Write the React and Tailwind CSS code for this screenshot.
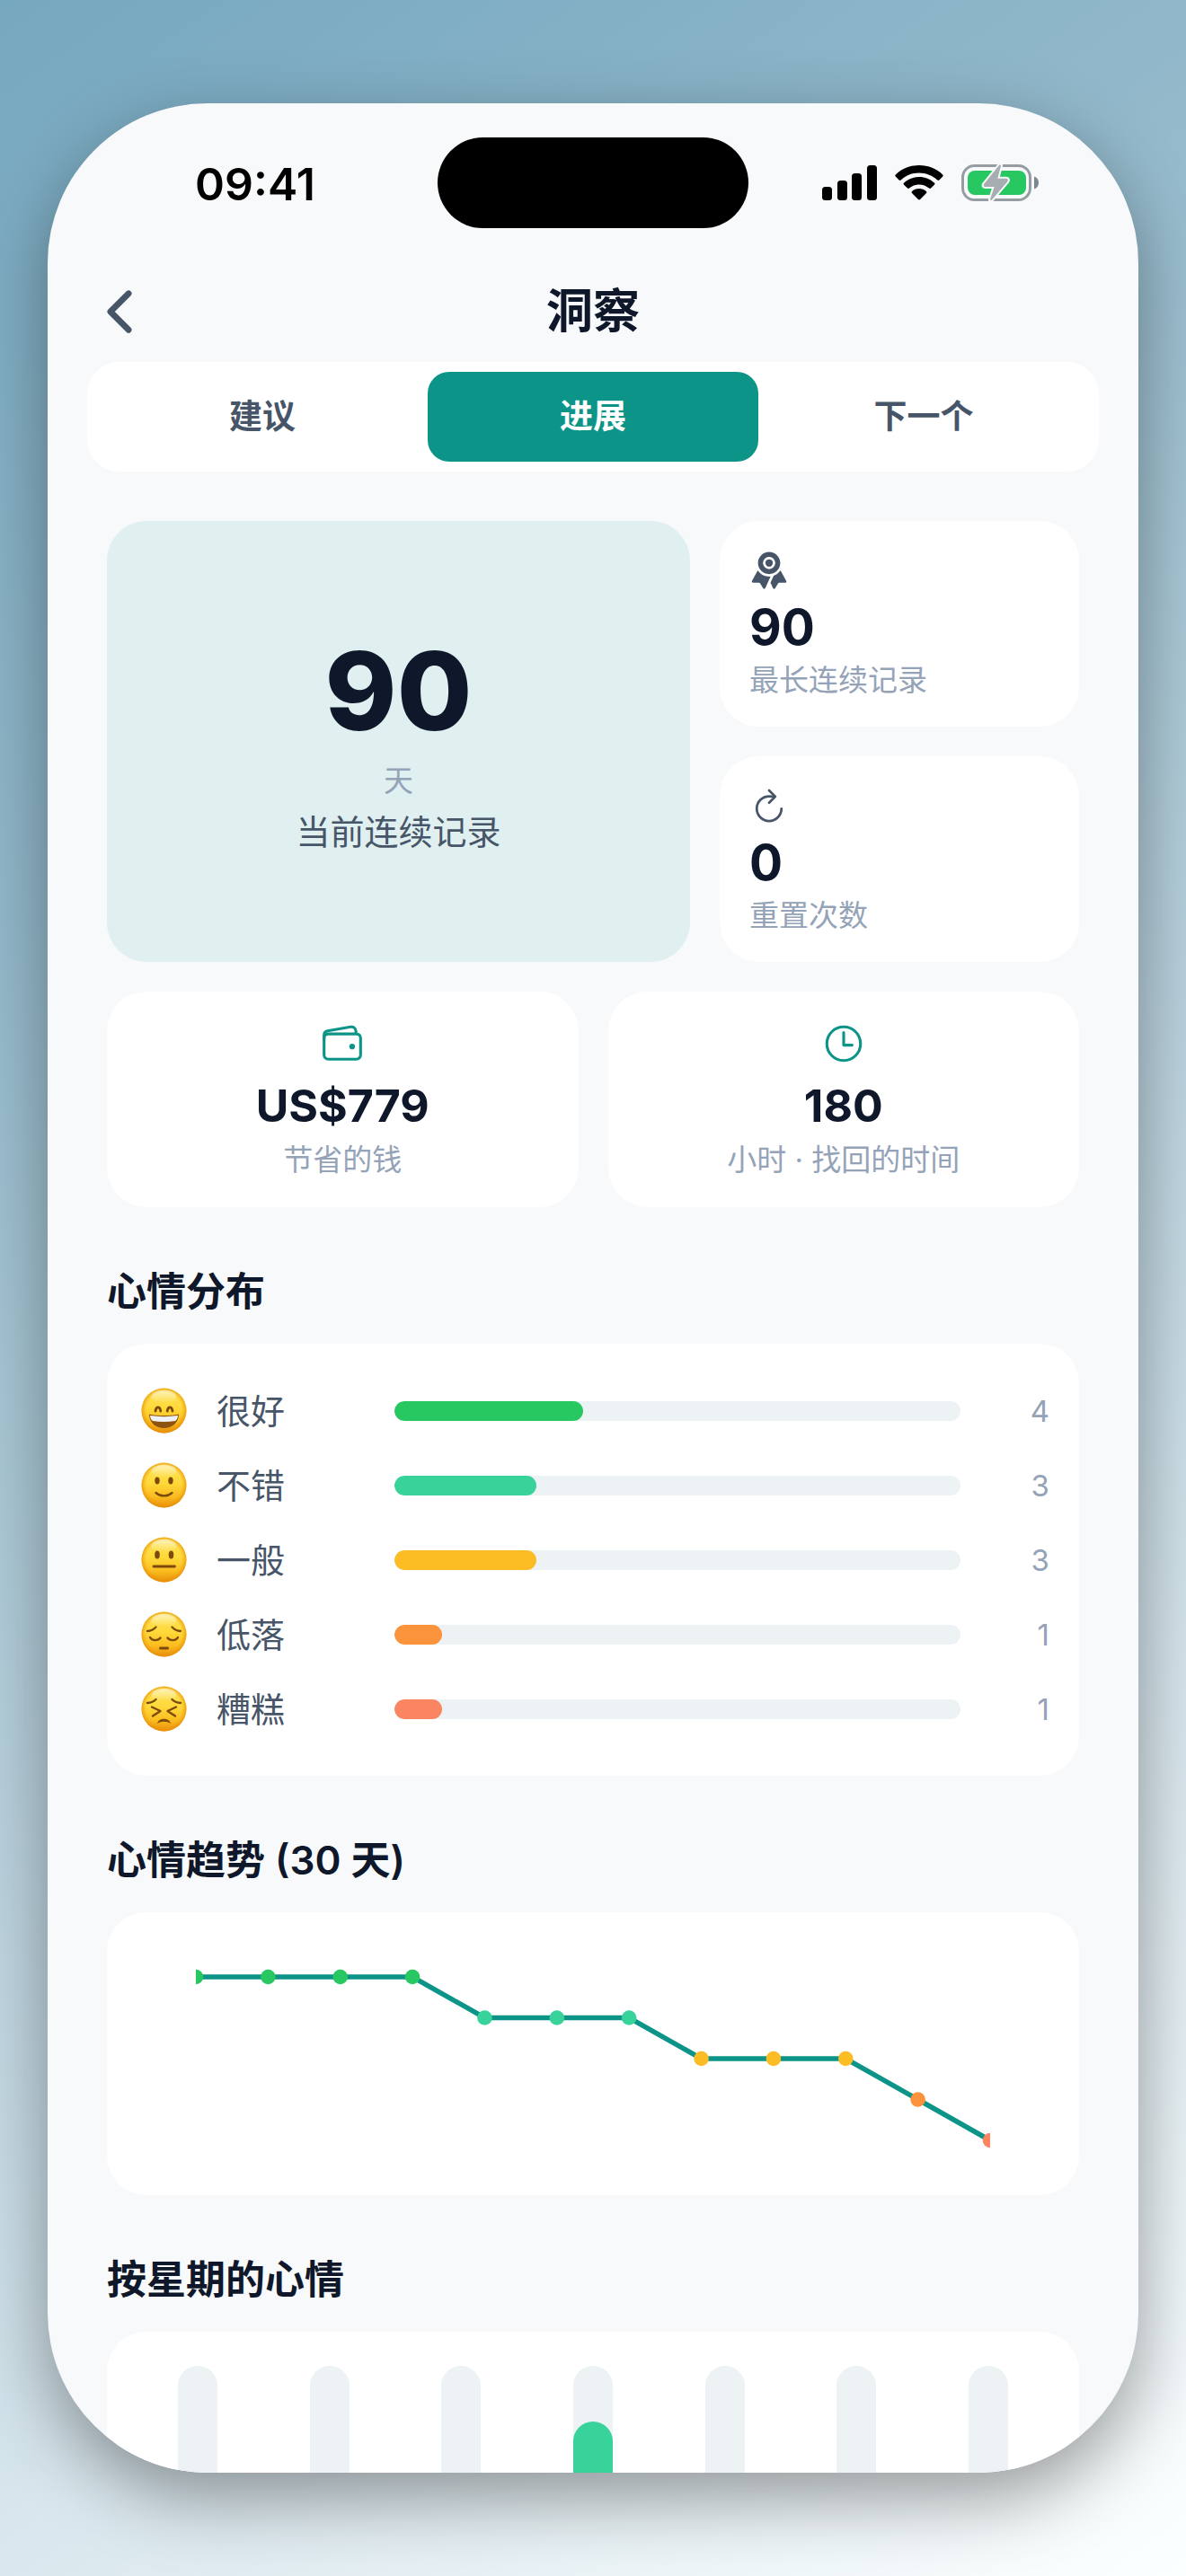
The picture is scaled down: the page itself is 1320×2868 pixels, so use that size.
import React, { useState } from "react";
import {
  IoChevronBack,
  IoRefreshOutline,
  IoRibbon,
  IoTimeOutline,
  IoWalletOutline,
} from "react-icons/io5";

const tabs = ["建议", "进展", "下一个"];

const moods = [
  { face: "great", label: "很好", count: 4, bar: "bg-[#27c861]" },
  { face: "good", label: "不错", count: 3, bar: "bg-[#38d39b]" },
  { face: "okay", label: "一般", count: 3, bar: "bg-[#fbbc24]" },
  { face: "low", label: "低落", count: 1, bar: "bg-[#fb923c]" },
  { face: "awful", label: "糟糕", count: 1, bar: "bg-[#fb8560]" },
];

const levelColors = {
  5: "#27c861",
  4: "#38d39b",
  3: "#fbbc24",
  2: "#fb923c",
  1: "#fb8560",
};

const trend = [5, 5, 5, 5, 4, 4, 4, 3, 3, 3, 2, 1];

const weekdays = [0, 0, 0, 72, 0, 0, 0];

function SignalIcon() {
  return (
    <svg width="61" height="39" viewBox="0 0 61 39" aria-hidden="true">
      <rect x="0" y="24" width="11" height="15" rx="3.5" />
      <rect x="17" y="17" width="11" height="22" rx="3.5" />
      <rect x="33" y="9" width="11" height="30" rx="3.5" />
      <rect x="50" y="0" width="11" height="39" rx="3.5" />
    </svg>
  );
}

function WifiIcon() {
  return (
    <svg width="54" height="39" viewBox="0 0 54 39" aria-hidden="true">
      <path d="M27 0c10.300 0 19.600 4 26.200 10.400.7.700.7 1.500 0 2.200l-3.800 3.800c-.6.600-1.400.600-2 0C42 11.500 35 8.400 27 8.400S12 11.500 6.600 16.400c-.6.600-1.400.600-2 0L.8 12.600c-.7-.7-.7-1.500 0-2.200C7.400 4 16.700 0 27 0z" />
      <path d="M27 13c6.600 0 12.500 2.500 16.900 6.600.7.600.7 1.500 0 2.100l-3.900 3.900c-.6.600-1.400.600-2 0-3-2.700-6.800-4.200-11-4.200s-8 1.500-11 4.200c-.6.600-1.400.600-2 0l-3.900-3.900c-.7-.6-.7-1.500 0-2.100C14.500 15.500 20.400 13 27 13z" />
      <path d="M27 26c3.100 0 5.800 1.100 7.900 2.900.7.600.7 1.400.1 2l-6.900 7.200c-.6.600-1.600.600-2.200 0L19 30.900c-.6-.6-.6-1.400.1-2C21.200 27.100 23.900 26 27 26z" />
    </svg>
  );
}

function BatteryIcon() {
  const bolt = "M43 1.500 26 22.500c-.7.900-.3 1.500.6 1.500H38l-5 15 17.500-20.500c.8-1 .4-1.700-.6-1.700H39z";
  return (
    <svg width="87" height="41" viewBox="0 0 87 41" aria-hidden="true">
      <rect x="1.500" y="1.500" width="75" height="38" rx="13" fill="none" stroke="#959da3" strokeWidth="3" />
      <rect x="7" y="7" width="65" height="27" rx="8" fill="#27c861" />
      <path d="M81 13.500c3 .8 5 3.500 5 7s-2 6.200-5 7z" fill="#7c8790" />
      <path d={bolt} fill="#f7f9fb" stroke="#f7f9fb" strokeWidth="6" strokeLinejoin="round" />
      <path d={bolt} fill="#a8adb1" stroke="#a8adb1" strokeWidth="2" strokeLinejoin="round" />
    </svg>
  );
}

function FaceFeatures({ face }) {
  const ink = "#7c4a0c";
  if (face === "great") {
    return (
      <>
        <path d="M15.500 26c.8-5.500 5-5.500 5.800 0M28.700 26c.8-5.500 5-5.500 5.800 0" fill="none" stroke={ink} strokeWidth="2.800" strokeLinecap="round" />
        <path d="M8.500 29.500c10 2 23 2 33 0 0 9-7 15.500-16.500 15.500S8.500 38.500 8.500 29.500z" fill="#8d5410" />
        <path d="M9.500 31c10 1.500 21 1.500 31 0-.2 3-1.200 5-3 6-8 1.200-17 1.200-25 0-1.800-1-2.800-3-3-6z" fill="#eef1f5" />
      </>
    );
  }
  if (face === "good") {
    return (
      <>
        <ellipse cx="17.500" cy="20.500" rx="2.700" ry="4" fill={ink} />
        <ellipse cx="32.500" cy="20.500" rx="2.700" ry="4" fill={ink} />
        <path d="M16 34c5 4.500 13 4.500 18 0" fill="none" stroke={ink} strokeWidth="2.400" strokeLinecap="round" />
      </>
    );
  }
  if (face === "okay") {
    return (
      <>
        <ellipse cx="17.500" cy="20" rx="2.800" ry="4.500" fill={ink} />
        <ellipse cx="33" cy="20" rx="2.800" ry="4.500" fill={ink} />
        <path d="M13.500 33h23.500" stroke={ink} strokeWidth="2.800" strokeLinecap="round" />
      </>
    );
  }
  if (face === "low") {
    return (
      <>
        <path d="M6.500 22c4-.3 7-1.800 9.500-4.500M43.500 22c-4-.3-7-1.800-9.500-4.500M9.500 29c2 4 9 4 11.500.5M40.500 29c-2 4-9 4-11.500.5" fill="none" stroke={ink} strokeWidth="2.300" strokeLinecap="round" />
        <path d="M21 41h8" stroke={ink} strokeWidth="3" strokeLinecap="round" />
      </>
    );
  }
  return (
    <>
      <path d="M6.500 19c4-.3 7-1.300 9.500-4M43.500 19c-4-.3-7-1.300-9.500-4M11.500 23.500l9.500 4.500-8.500 5.500M38.500 23.500l-9.500 4.500 8.500 5.500" fill="none" stroke={ink} strokeWidth="2.400" strokeLinecap="round" strokeLinejoin="round" />
      <path d="M17.500 42c1.500-7 13.500-7 15 0-4-3-11-3-15 0z" fill={ink} />
    </>
  );
}

function MoodFace({ face }) {
  return (
    <svg className="h-[51px] w-[61px] shrink-0" viewBox="0 0 50 51" aria-hidden="true">
      <defs>
        <linearGradient id={`skin-${face}`} x1="0" y1="0" x2="0" y2="1">
          <stop offset="0" stopColor="#fde458" />
          <stop offset="0.45" stopColor="#ffd93a" />
          <stop offset="0.75" stopColor="#fbbd1f" />
          <stop offset="1" stopColor="#e88f0c" />
        </linearGradient>
        <radialGradient id={`edge-${face}`} cx="0.5" cy="0.49" r="0.52">
          <stop offset="0.75" stopColor="#f0a010" stopOpacity="0" />
          <stop offset="1" stopColor="#e58e0a" stopOpacity="0.9" />
        </radialGradient>
        <linearGradient id={`shine-${face}`} x1="0" y1="0" x2="0" y2="1">
          <stop offset="0" stopColor="#fff" stopOpacity="0.6" />
          <stop offset="1" stopColor="#fff" stopOpacity="0" />
        </linearGradient>
      </defs>
      <circle cx="25" cy="25.500" r="25" fill={`url(#skin-${face})`} />
      <circle cx="25" cy="25.500" r="25" fill={`url(#edge-${face})`} />
      <ellipse cx="25" cy="10" rx="14" ry="7" fill={`url(#shine-${face})`} />
      <FaceFeatures face={face} />
    </svg>
  );
}

function StatusBar() {
  return (
    <div className="grid h-[176px] shrink-0 grid-cols-[1fr_346px_1fr] items-center">
      <span className="pt-1 pl-7 text-center text-[50px] leading-[60px] font-semibold text-black">09:41</span>
      <div className="h-[101px] rounded-full bg-black" />
      <div className="flex items-center justify-center gap-5 pr-7">
        <SignalIcon />
        <WifiIcon />
        <BatteryIcon />
      </div>
    </div>
  );
}

function SmallStat({ icon, value, label }) {
  return (
    <div className="flex flex-1 flex-col items-start gap-[6px] rounded-[44px] bg-white p-[33px]">
      {icon}
      <p className="text-[55px] leading-[70px] font-bold">{value}</p>
      <p className="text-[33px] leading-[37px] text-[#94a3b8]">{label}</p>
    </div>
  );
}

function WideStat({ icon, value, label }) {
  return (
    <div className="flex flex-1 flex-col items-center rounded-[44px] bg-white p-[33px]">
      {icon}
      <p className="mt-3 text-[50px] leading-[64px] font-bold">{value}</p>
      <p className="mt-2 text-[33px] leading-[40px] text-[#94a3b8]">{label}</p>
    </div>
  );
}

function Section({ title, children }) {
  return (
    <section className="pt-[68px]">
      <h2 className="mb-[31px] text-[44px] leading-[53px] font-semibold">{title}</h2>
      {children}
    </section>
  );
}

function TrendChart() {
  const points = trend.map((level, i) => ({
    x: (i * 884) / (trend.length - 1),
    y: 39 + (5 - level) * 45.5,
    level,
  }));

  return (
    <svg className="h-auto w-full" viewBox="0 0 884 249" role="img" aria-label="心情趋势">
      <polyline
        points={points.map((p) => `${p.x},${p.y}`).join(" ")}
        fill="none"
        stroke="#0d9488"
        strokeWidth="5.5"
      />
      {points.map((p) => (
        <circle key={p.x} cx={p.x} cy={p.y} r="8.3" fill={levelColors[p.level]} />
      ))}
    </svg>
  );
}

function App() {
  const [active, setActive] = useState("进展");
  const total = moods.reduce((sum, mood) => sum + mood.count, 0);

  return (
    <div className="flex h-screen flex-col bg-[linear-gradient(145deg,#76a8c0_0%,#93b9cb_27%,#d9e7ee_75%,#fcffff_100%)] px-[53px] py-[115px] font-['Inter','Noto_Sans_CJK_SC',sans-serif] text-[#0f172a]">
      <div className="flex min-h-0 flex-1 flex-col overflow-hidden rounded-[178px] bg-[#f7f9fb] shadow-[0_28px_80px_rgba(0,0,0,0.38)]">
        <StatusBar />

        <header className="grid h-[112px] shrink-0 grid-cols-[1fr_auto_1fr] items-center px-11">
          <button type="button" aria-label="返回" className="w-fit text-[#475569]">
            <IoChevronBack size={72} />
          </button>
          <h1 className="text-[52px] leading-[60px] font-bold">洞察</h1>
        </header>

        <nav className="mx-11 flex shrink-0 rounded-[36px] bg-white p-[11px]">
          {tabs.map((tab) => (
            <button
              key={tab}
              type="button"
              onClick={() => setActive(tab)}
              className={`h-[100px] flex-1 rounded-3xl text-[37px] font-semibold ${
                active === tab ? "bg-[#0d9488] text-white" : "text-[#475569]"
              }`}
            >
              {tab}
            </button>
          ))}
        </nav>

        <main className="px-[66px] pt-[55px]">
          <div className="flex gap-[33px]">
            <div className="flex flex-[649] flex-col items-center justify-center rounded-[44px] bg-[#e0f0f0] pb-1">
              <p className="text-[121px] leading-[146px] font-extrabold">90</p>
              <p className="mt-[6px] text-[33px] leading-[42px] text-[#94a3b8]">天</p>
              <p className="mt-[11px] text-[38px] leading-[50px] text-[#475569]">当前连续记录</p>
            </div>
            <div className="flex flex-[400] flex-col gap-[33px]">
              <SmallStat icon={<IoRibbon size={44} className="text-[#475569]" />} value="90" label="最长连续记录" />
              <SmallStat icon={<IoRefreshOutline size={44} className="text-[#475569]" />} value="0" label="重置次数" />
            </div>
          </div>

          <div className="mt-[33px] flex gap-[33px]">
            <WideStat icon={<IoWalletOutline size={50} className="text-[#0d9488]" />} value="US$779" label="节省的钱" />
            <WideStat icon={<IoTimeOutline size={50} className="text-[#0d9488]" />} value="180" label="小时 · 找回的时间" />
          </div>

          <Section title="心情分布">
            <ul className="rounded-[44px] bg-white p-[33px]">
              {moods.map((mood) => (
                <li key={mood.face} className="flex h-[83px] items-center gap-7">
                  <MoodFace face={mood.face} />
                  <span className="w-[170px] text-[38px] leading-[50px] text-[#475569]">{mood.label}</span>
                  <div className="h-[22px] flex-1 overflow-hidden rounded-full bg-[#edf2f5]">
                    <div
                      className={`h-full rounded-full ${mood.bar}`}
                      style={{ width: `${(mood.count / total) * 100}%` }}
                    />
                  </div>
                  <span className="w-[71px] text-right text-[33px] leading-[40px] text-[#94a3b8]">{mood.count}</span>
                </li>
              ))}
            </ul>
          </Section>

          <Section title="心情趋势 (30 天)">
            <div className="flex rounded-[44px] bg-white px-[99px] py-[33px]">
              <TrendChart />
            </div>
          </Section>

          <Section title="按星期的心情">
            <div className="flex gap-[11px] rounded-[44px] bg-white px-[33px] py-[38px]">
              {weekdays.map((fill, i) => (
                <div key={i} className="flex flex-1 justify-center">
                  <div className="flex h-[221px] w-11 items-end overflow-hidden rounded-full bg-[#edf2f5]">
                    <div className="w-full rounded-full bg-[#38d39b]" style={{ height: `${fill}%` }} />
                  </div>
                </div>
              ))}
            </div>
          </Section>
        </main>
      </div>
    </div>
  );
}

export default App;
